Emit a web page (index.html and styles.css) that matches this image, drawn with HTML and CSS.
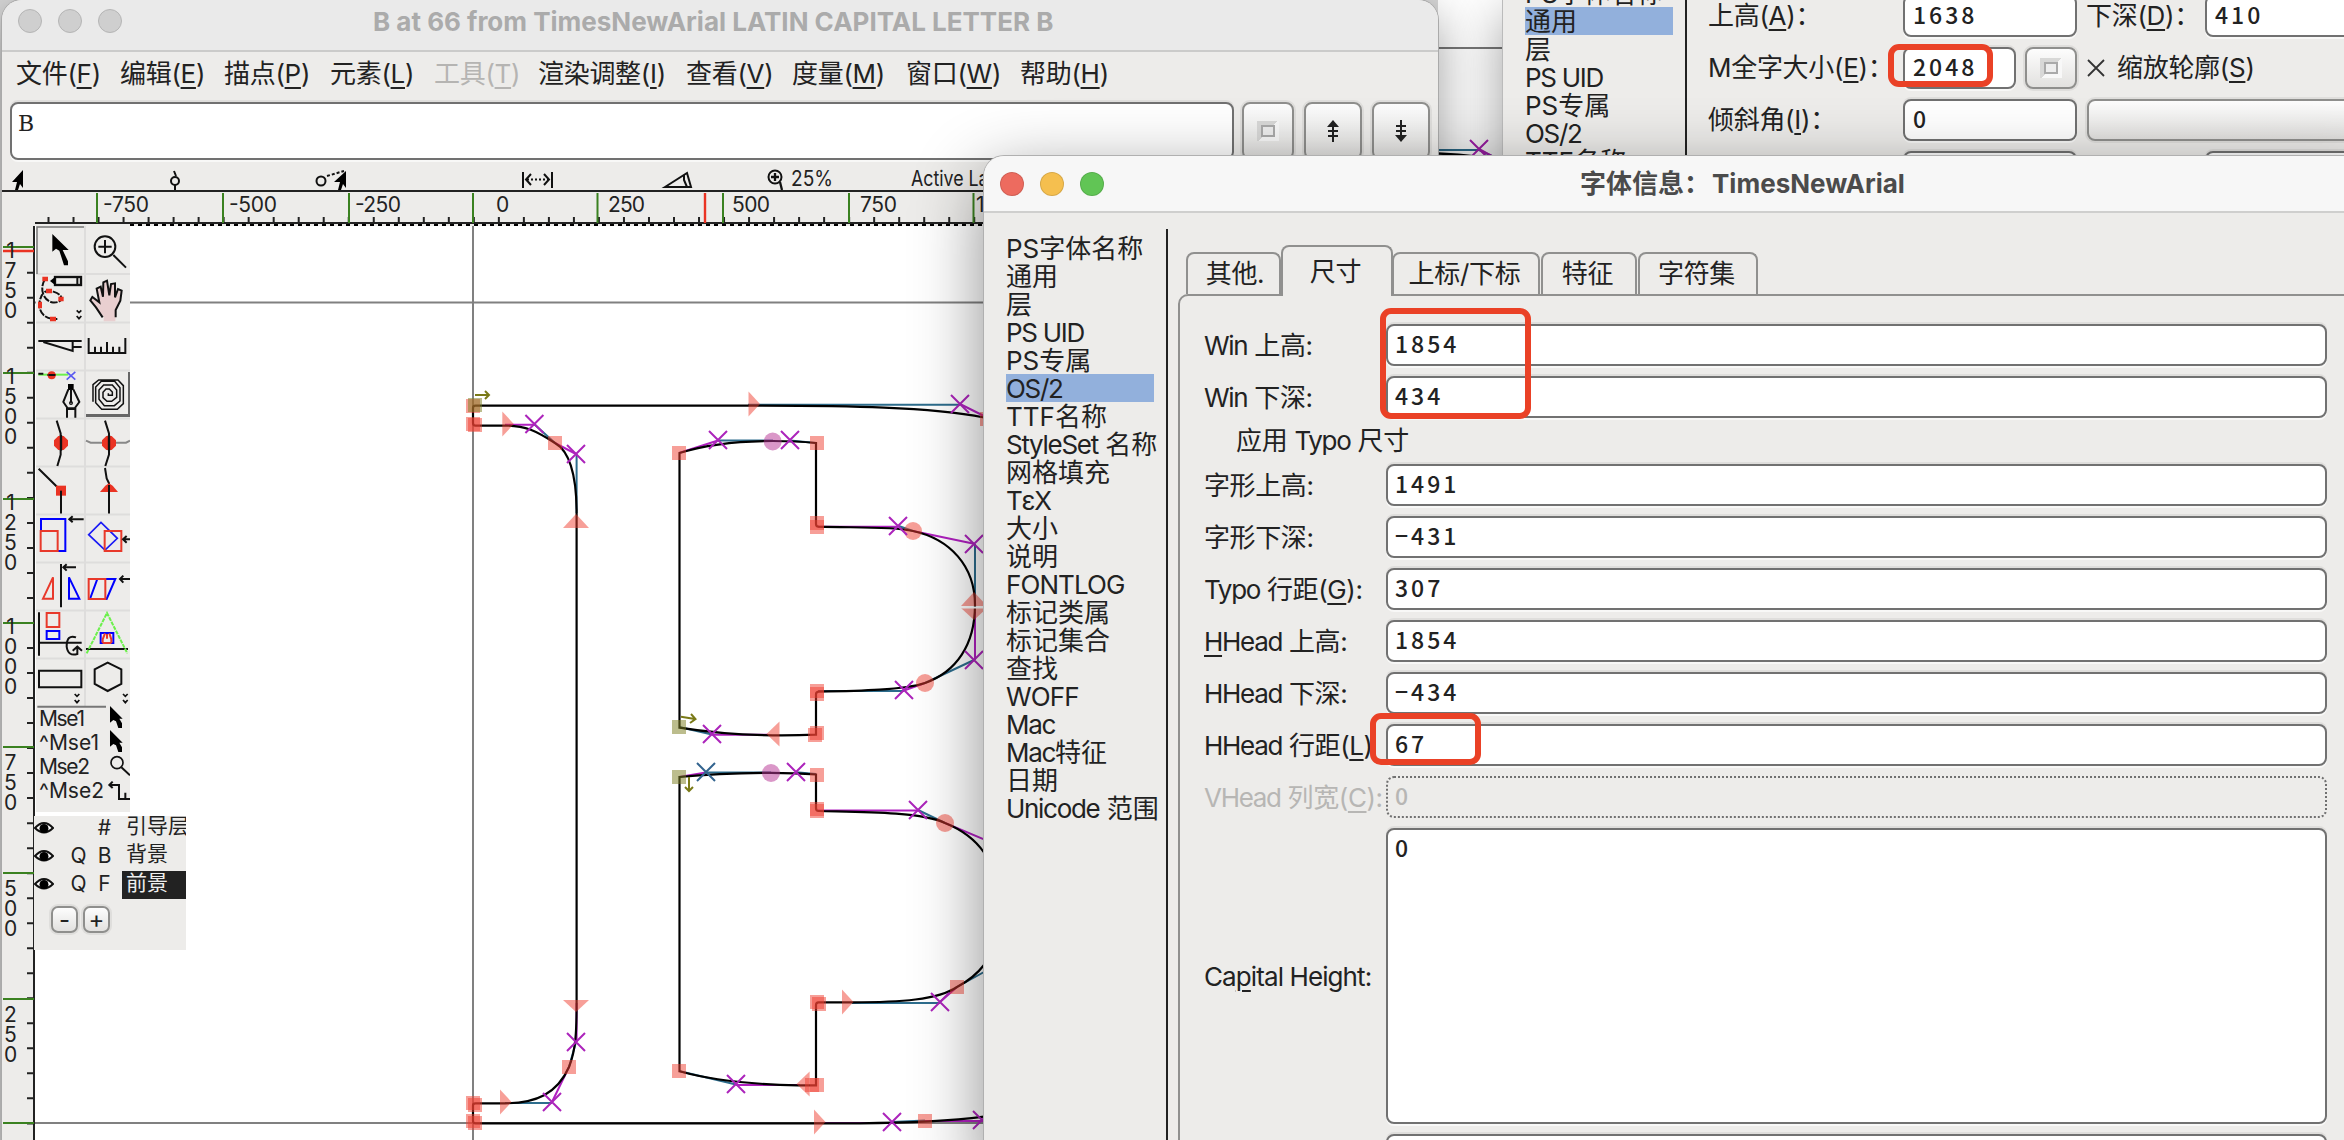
FILE: index.html
```html
<!DOCTYPE html>
<html lang="zh-CN">
<head>
<meta charset="utf-8">
<title>字体信息：TimesNewArial</title>
<link rel="stylesheet" href="styles.css">
</head>
<body>
<div class="desktop">

<svg class="back-glyph" viewBox="1438 0 65 156" width="65" height="156">
  <path d="M1438 48H1503" stroke="#777" stroke-width="2"/>
  <path d="M1438 150H1479L1503 161" stroke="#2d6d8d" stroke-width="2" fill="none"/>
  <path d="M1438 153.5C1455 154 1465 155 1480 157" stroke="#000" stroke-width="2.5" fill="none"/>
  <path d="M1479 149L1503 162M1470 140L1488 158M1488 140L1470 158" stroke="#a41fae" stroke-width="2" fill="none"/>
</svg>

<section class="window glyph-window">
  <header class="titlebar inactive">
    <span class="lights"><i></i><i></i><i></i></span>
    <span class="title glyph-title">B at 66 from TimesNewArial LATIN CAPITAL LETTER B</span>
  </header>
  <nav class="menubar">
    <span class="m1">文件(<u>F</u>)</span><span class="m1">编辑(<u>E</u>)</span><span class="m2">描点(<u>P</u>)</span><span class="m1">元素(<u>L</u>)</span><span class="m1 off">工具(<u>T</u>)</span><span class="m3">渲染调整(<u>I</u>)</span><span class="m2">查看(<u>V</u>)</span><span class="m4">度量(<u>M</u>)</span><span class="m4">窗口(<u>W</u>)</span><span class="m4">帮助(<u>H</u>)</span>
  </nav>
  <div class="entry-row">
    <div class="entry word">B</div>
    <div class="btn b1"><span class="mark"></span></div>
    <div class="btn b2"><svg width="14" height="24" viewBox="0 0 14 24"><path d="M7 4V23M2 12H12M2 17H12" stroke="#222" stroke-width="2"/><path d="M7 1L13 8H1Z" fill="#222"/></svg></div>
    <div class="btn b2"><svg width="14" height="24" viewBox="0 0 14 24"><path d="M7 1V20M2 7H12M2 12H12" stroke="#222" stroke-width="2"/><path d="M7 23L13 16H1Z" fill="#222"/></svg></div>
  </div>
  <svg class="info" viewBox="2 163 1436 27" width="1436" height="27">
    <g fill="none" stroke="#111" stroke-width="2">
      <path d="M23 170V188L20 184L18 190H15L17 182H12Z" fill="#000" stroke="none"/>
      <circle cx="175" cy="181" r="4"/><path d="M174 171L176 176M175 185V190"/>
      <circle cx="321" cy="181" r="4.5"/><path d="M327 176L344 171" stroke-dasharray="3 2"/>
      <path d="M346 171V188L343 184L341 190H338L340 182H334Z" fill="#000" stroke="none"/>
      <path d="M523 172V188M552 172V188"/><path d="M527 179.500H548" stroke-dasharray="2 2"/><path d="M531 174L526 179.500L531 185M544 174L549 179.500L544 185"/>
      <path d="M665 187L687 173L691 187ZM684 175V180L687 187"/>
      <circle cx="775" cy="177" r="6.500"/><path d="M771 177H779M775 173V181M780 182L782 190" stroke-width="2.300"/>
    </g>
    <text x="791" y="186" textLength="42" lengthAdjust="spacingAndGlyphs">25%</text>
    <text x="911" y="186" textLength="104" lengthAdjust="spacingAndGlyphs">Active Layer</text>
  </svg>
  <svg class="ruler-h" viewBox="2 190 1436 36" width="1436" height="36">
    <path d="M2 191H1438M35 223H1438" stroke="#222" stroke-width="2"/>
    <path d="M130 225H1438" stroke="#000" stroke-width="2" stroke-dasharray="4 4"/>
    <path d="M47.500 220H1438" stroke="#222" stroke-width="6" stroke-dasharray="2 23.020"/>
    <path d="M97 193V223M223 193V223M349 193V223M473 193V223M597.500 193V223M723 193V223M849 193V223M973.500 193V223" stroke="#3a8120" stroke-width="2"/>
    <path d="M705 193V223" stroke="#ea3323" stroke-width="2.400"/>
    <g>
      <text x="103" y="212" textLength="46">-750</text><text x="229" y="212" textLength="48">-500</text><text x="355" y="212" textLength="46">-250</text>
      <text x="496" y="212">0</text><text x="608" y="212" textLength="37">250</text><text x="732" y="212" textLength="38">500</text><text x="860" y="212" textLength="37">750</text><text x="976" y="212">1000</text>
    </g>
  </svg>
  <div class="workspace">
    <svg class="ruler-v" viewBox="2 226 33 914" width="33" height="914">
      <path d="M34 226V1140" stroke="#222" stroke-width="2"/>
      <path d="M30 271.700V1140" stroke="#222" stroke-width="6" stroke-dasharray="2 23.020"/>
      <path d="M3 247H34M3 373H34M3 499H34M3 623H34M3 747H34M3 873H34M3 999H34M3 1123H34" stroke="#3a8120" stroke-width="2"/>
      <path d="M3 251H34" stroke="#ea3323" stroke-width="2.400"/>
      <g text-anchor="middle">
        <text x="10.500" y="258">1</text><text x="10.500" y="278">7</text><text x="10.500" y="298">5</text><text x="10.500" y="318">0</text>
        <text x="10.500" y="384">1</text><text x="10.500" y="404">5</text><text x="10.500" y="424">0</text><text x="10.500" y="444">0</text>
        <text x="10.500" y="510">1</text><text x="10.500" y="530">2</text><text x="10.500" y="550">5</text><text x="10.500" y="570">0</text>
        <text x="10.500" y="634">1</text><text x="10.500" y="654">0</text><text x="10.500" y="674">0</text><text x="10.500" y="694">0</text>
        <text x="10.500" y="770">7</text><text x="10.500" y="790">5</text><text x="10.500" y="810">0</text>
        <text x="10.500" y="896">5</text><text x="10.500" y="916">0</text><text x="10.500" y="936">0</text>
        <text x="10.500" y="1022">2</text><text x="10.500" y="1042">5</text><text x="10.500" y="1062">0</text>
      </g>
    </svg>
    <svg class="canvas" viewBox="35 226 1403 914" width="1403" height="914">
      <defs>
        <path id="x" d="M-9-9L9 9M9-9L-9 9"/>
        <rect id="s" x="-7" y="-7" width="14" height="14"/>
        <path id="r" d="M0-12.500L11.500 0L0 12.500Z"/>
        <path id="l" d="M0-12.500L-13 0L0 12.500Z"/>
        <path id="t" d="M-13 7L0-7L13 7Z"/>
        <path id="d" d="M-13-6L0 6L13-6Z"/>
      </defs>
      <path d="M473 226V1140M35 302.500H1438M35 1123H1438" stroke="#808080" stroke-width="2"/>
      <g fill="none" stroke="#2d6d8d" stroke-width="2">
        <path d="M748 404.800H960M534 424L555 443M576.600 454V513M718 440.500H773M790 440.500L816 443M898 525.700L913 531M975 544V605M974 660L925 683M904 691H818M679 727L712 734.500M705 772.500H771M796 772.300L816 774M918 810L945 823M957 987L984 972M852 1003H940M576 1042L569 1067M552 1103H505M679 1071L736 1084.500M892 1122L925 1120.500"/>
      </g>
      <g fill="none" stroke="#b020c0" stroke-width="2">
        <path d="M505 424.800H534M555 443L576 454M679 453L718 440.500M960 404L984 416M818 526.700H898M913 531L974 543.700M975 612V660M904 690.500L925 683M712 734.700H768M679 777L706 772.500M818 810.500H918M945 823L984 839.300M940 1002L957 987M576.600 1003V1042M569 1067L552 1102M736 1085H800M825 1123H892M925 1121H984"/>
      </g>
      <g fill="none" stroke="#000" stroke-width="2.200">
        <path d="M984 417.500C930 407 850 405.700 748 405.700H475.500Q473 405.700 473 408V423Q473 425.600 475.500 425.600H505C526 425.600 536 431 555 443C569 451 576.600 475 576.600 513V1003C576.600 1030 576 1050 569 1067C557 1094 536 1103 505 1103.300H475.500Q473 1103.300 473 1105.500V1121Q473 1123.300 475.500 1123.300H860C900 1123 950 1121 984 1116.700"/>
        <path d="M679.500 453C705 445 735 441 773 441Q796 441 816 443V524Q816 526.500 818.500 526.700C850 528 890 526 913 531C950 539 975 566 975 605C975 645 956 672 925 683C904 690 860 691 818.500 691.700Q816 692 816 694.500V734.700Q795 735.500 773 735.300Q725 735 679.500 727.700Z"/>
        <path d="M984 852.500C974 838 960 829 945 823C920 811 850 812 818.500 811Q816 811 816 808V774.500Q795 772.800 771 772.800Q720 773 679.500 777V1071.300Q725 1084 798 1085.300H816V1005Q816 1002.300 818.500 1002.300H852C900 1002.300 938 1000 957 987Q974 978 984 965"/>
      </g>
      <g fill="#ef4032" fill-opacity=".5">
        <use href="#s" x="473" y="406"/><use href="#s" x="473" y="424"/><use href="#s" x="475" y="425"/><use href="#s" x="555" y="443"/><use href="#s" x="679" y="453"/><use href="#s" x="817" y="443"/>
        <use href="#s" x="817" y="523"/><use href="#s" x="817" y="527"/><use href="#s" x="817" y="691"/><use href="#s" x="817" y="694"/><use href="#s" x="817" y="733"/><use href="#s" x="815" y="735"/><use href="#s" x="987" y="419"/>
        <use href="#s" x="569" y="1067"/><use href="#s" x="473" y="1103"/><use href="#s" x="475" y="1105"/><use href="#s" x="473" y="1121"/><use href="#s" x="475" y="1123"/>
        <use href="#s" x="817" y="775"/><use href="#s" x="817" y="809"/><use href="#s" x="817" y="811"/><use href="#s" x="817" y="1002"/><use href="#s" x="819" y="1004"/><use href="#s" x="957" y="987"/><use href="#s" x="679" y="1071"/><use href="#s" x="817" y="1085"/><use href="#s" x="812" y="1085"/><use href="#s" x="925" y="1121"/>
        <circle cx="913" cy="531" r="9"/><circle cx="925" cy="683" r="9"/><circle cx="945" cy="823" r="9"/>
        <use href="#r" x="748.500" y="404"/><use href="#r" x="502.300" y="424"/><use href="#r" x="500" y="1102"/><use href="#r" x="842" y="1002"/><use href="#r" x="814" y="1122"/>
        <use href="#l" x="779.500" y="734"/><use href="#l" x="809.600" y="1084"/>
        <use href="#t" x="576" y="521"/><use href="#t" x="974" y="599"/><use href="#d" x="974" y="614"/><use href="#d" x="576" y="1006"/>
      </g>
      <path d="M961 607.500H984" stroke="#fff" stroke-width="2"/>
      <g fill="#b83896" fill-opacity=".52"><circle cx="772.700" cy="441.500" r="9"/><circle cx="771" cy="773" r="9"/></g>
      <g fill="#7f8024" fill-opacity=".52"><use href="#s" x="475" y="405"/><use href="#s" x="679" y="727"/><use href="#s" x="679" y="777"/></g>
      <path d="M475 395H489M485 391L489 395L485 399M681 716.700L695 719M691 714L695.500 719L690 723M689 777V790M685 787L689 791L693 787" stroke="#7a7a18" stroke-width="2" fill="none"/>
      <g stroke="#ac24bb" stroke-width="2">
        <use href="#x" x="534.400" y="424"/><use href="#x" x="576" y="454"/><use href="#x" x="718" y="440"/><use href="#x" x="790" y="440"/><use href="#x" x="960" y="404"/><use href="#x" x="898" y="526"/><use href="#x" x="974" y="544"/><use href="#x" x="974" y="660"/><use href="#x" x="904" y="690"/><use href="#x" x="712" y="734"/>
        <use href="#x" x="796" y="772"/><use href="#x" x="918" y="810"/><use href="#x" x="576" y="1042"/><use href="#x" x="552" y="1102"/><use href="#x" x="940" y="1002"/><use href="#x" x="736" y="1084"/><use href="#x" x="892" y="1122"/><use href="#x" x="982" y="1120"/>
      </g>
      <use href="#x" x="706" y="772" stroke="#33648f" stroke-width="2"/>
    </svg>

    <div class="palette tools">
      <svg viewBox="36 226 94 586" width="94" height="586" fill="none" stroke="#111" stroke-width="6">
        <path d="M36 274H130M36 322.500H130M36 370.500H130M36 418.500H130M36 466.500H130M36 514.500H130M36 562.500H130M36 610.500H130M36 658.500H130M85 226V706" stroke="#dedddc" stroke-width="2"/>
        <path d="M37 274V227H84" stroke="#777" stroke-width="1.500"/>
        <path d="M129.500 372V417M86 415.500H130" stroke="#666" stroke-width="3"/>
        <g transform="translate(0 220) scale(.33333)">
          <path d="M157 42V95L168 86L178 92L192 136H204V124L188 90H206Z" fill="#000" stroke="none"/>
          <circle cx="315" cy="80" r="31"/><path d="M340 105L378 143M295 80H335M315 60V100"/>
          <path d="M135 178C118 205 128 238 155 247C185 252 200 228 160 215C135 205 120 222 118 255C120 285 140 298 172 297" stroke-dasharray="22 4"/>
          <rect x="165" y="171" width="78" height="24" stroke-width="7"/><path d="M232 171V195"/><path d="M150 183L166 170V196Z" fill="#000" stroke="none"/>
          <path d="M127 170h17v14h-17zM138 206h18v14h-18zM175 230h16v14h-16zM114 245h12v20h-12zM150 290h18v14h-18z" fill="#ea3323" stroke="none"/>
          <path d="M230 271L237 278L244 271M230 288L237 296L244 288" stroke-width="5"/>
          <path d="M311 304V290L288 262L272 240L276 232L298 246L291 205L302 199L309 228L311 187L321 182L327 224L334 192L345 192L345 232L354 208L364 212L361 240L348 268L346 304Z" fill="#e9cfd0" stroke="none"/>
          <path d="M308 292L288 262L271 241L277 231L298 247L290 206L302 200L309 230L310 187L321 182L328 226L333 192L345 190L345 232L354 207L365 212L361 242L347 270V292"/>
          <path d="M115 363H245M130 366L218 393V363M218 381H245"/>
          <path d="M266 354V399H376V354M285 380V399M303 380V399M321 366V399M339 380V399M358 380V399"/>
          <path d="M115 464H205" stroke="#6cf04c"/><path d="M115 461H130M142 465H168"/><circle cx="155" cy="466" r="12" fill="#ea3323" stroke="none"/><path d="M145 465H165"/>
          <path d="M200 456L226 479M226 456L200 479" stroke="#5a5af0" stroke-width="5"/>
          <path d="M204 492h17v18h-17z" fill="#000" stroke="none"/><path d="M205 508L190 546L203 565H224L238 546L220 508M213 508V548M201 593V567H226V593"/><circle cx="213" cy="549" r="4" stroke-width="4"/>
          <path d="M325 520V526H337V516L328 507H318L309 517V533L321 544H335L350 532V510L337 495H311L297 510V538L313 557H343L360 543V503L344 484H304L287 501V548L305 568H352L370 551V497L354 480H296L279 494V545" stroke-width="4.500"/>
          <path d="M170 602L182 640V704L172 738" /><path d="M175 648h16l13 13v16l-13 13h-16l-13-13v-16z" fill="#ea3323" stroke="none"/><path d="M183 645V692" stroke-width="7"/>
          <path d="M258 662L272 668H378L390 662" stroke="#888"/><path d="M315 602L327 640V704L316 738"/><path d="M319 648h16l13 13v16l-13 13h-16l-13-13v-16z" fill="#ea3323" stroke="none"/><path d="M327 645V692" stroke-width="7"/>
          <path d="M116 746L183 812V880" /><path d="M168 797h30v30h-30z" fill="#ea3323" stroke="none"/><path d="M183 812V880"/>
          <path d="M315 744L320 775L327 790V880"/><path d="M300 816L316 797L327 790L338 797L354 816Z" fill="#ea3323" stroke="none"/><path d="M327 795V880"/>
        </g>
        <g transform="translate(0 500) scale(.33333)">
          <path d="M123 57H196V153H123Z" stroke="#00f"/><path d="M122 93H173V153H122Z" stroke="#e8392b" fill="#edecea"/><path d="M251 58H208M218 49L208 58L218 67"/>
          <path d="M303 67L266 104L315 150L352 115Z" stroke="#1a1af5" stroke-width="5"/><path d="M314 93H364V153H314Z" stroke="#e8392b"/><path d="M390 118H368M380 108L369 118L380 128"/>
          <path d="M183 192V322M228 202H190M200 193L190 202L200 212"/><path d="M159 232V296H129Z" stroke="#e8392b"/><path d="M207 232V296H238Z" stroke="#00f"/>
          <path d="M292 237H346L320 297H270Z" stroke="#00f"/><path d="M266 237H316V297H266Z" stroke="#e8392b"/><path d="M390 237H360M370 227L360 237L370 248"/>
          <path d="M117 337V467M117 428H245"/><path d="M140 339H178V381H140Z" stroke="#e8392b"/><path d="M140 393H178V417H140Z" stroke="#00f"/><path d="M228 412Q200 402 200 440Q204 470 232 462V442M218 452L232 440L246 452"/>
          <path d="M258 447H384"/><path d="M260 460L321 339L382 460" stroke="#6cf04c" stroke-dasharray="12 3"/><path d="M302 399H340V429H302Z" stroke="#00f"/><path d="M308 429V418L315 400M334 429V418L328 400M321 402V416M308 429H334" stroke="#e8392b"/>
          <path d="M117 512H244V562H117ZM323 488L364 508V552L323 573L284 552V508Z"/>
          <path d="M224 582L231 589L238 582M224 600L231 608L238 600M369 582L376 589L383 582M369 600L376 608L383 600" stroke-width="5"/>
          <path d="M112 620H318" stroke="#777"/>
          <path id="ptr" d="M330 618V668L340 660L348 664L355 684H366V670L358 656H368Z" fill="#000" stroke="none"/><use href="#ptr" y="72"/>
          <circle cx="351" cy="788" r="18" stroke-width="5"/><path d="M364 802L390 826"/>
          <path d="M328 855H357V897H390M376 878V897M338 845L328 855L338 864"/>
        </g>
        <g class="mse"><text x="39" y="726" textLength="46">Mse1</text><text x="39" y="750" textLength="60">^Mse1</text><text x="39" y="774" textLength="51">Mse2</text><text x="39" y="798" textLength="65">^Mse2</text></g>
      </svg>
    </div>

    <div class="palette layers">
      <svg width="0" height="0" class="defs"><symbol id="eye" viewBox="0 0 20 14"><path d="M1 7Q10-3 19 7Q10 16 1 7Z" fill="#fff" stroke="#111" stroke-width="2"/><circle cx="10" cy="7.500" r="4.500" fill="#000"/></symbol></svg>
      <div class="layer"><svg width="20" height="14"><use href="#eye"/></svg><b></b><b>#</b><span>引导层</span></div>
      <div class="layer"><svg width="20" height="14"><use href="#eye"/></svg><b>Q</b><b>B</b><span>背景</span></div>
      <div class="layer"><svg width="20" height="14"><use href="#eye"/></svg><b>Q</b><b>F</b><span class="sel">前景</span></div>
      <div class="layer-btns"><div class="btn">-</div><div class="btn">+</div></div>
    </div>
  </div>
</section>

<section class="window general-window">
  <ul class="list list-back">
    <li>PS字体名称</li><li class="sel">通用</li><li>层</li><li><span class="l">PS UID</span></li><li>PS专属</li><li><span class="l">OS/2</span></li><li>TTF名称</li>
  </ul>
  <div class="general">
    <div class="grow"><label>上高(<u>A</u>)：</label><div class="entry w174">1638</div><label class="lab2">下深(<u>D</u>)：</label><div class="entry fill">410</div></div>
    <div class="grow"><label>M全字大小(<u>E</u>)：</label><div class="entry w113">2048</div><div class="btn em"><span class="mark"></span></div>
      <svg class="cross" width="18" height="18" viewBox="0 0 18 18"><path d="M1 1L17 17M17 1L1 17" stroke="#333" stroke-width="1.800"/></svg><label class="scale">缩放轮廓(<u>S</u>)</label></div>
    <div class="grow"><label>倾斜角(<u>I</u>)：</label><div class="entry w174">0</div><div class="btn wide"></div></div>
    <div class="grow"><label></label><div class="entry w174"></div><label class="lab2"></label><div class="entry fill"></div></div>
  </div>
  <div class="note n-em"></div>
</section>

<section class="window os2-window">
  <header class="titlebar active">
    <span class="lights"><i></i><i></i><i></i></span>
    <span class="title os2-title">字体信息：<span class="tn">TimesNewArial</span></span>
  </header>
  <div class="os2-body">
    <ul class="list">
      <li>PS字体名称</li><li>通用</li><li>层</li><li><span class="l">PS UID</span></li><li>PS专属</li><li class="sel"><span class="l">OS/2</span></li><li>TTF名称</li><li><span class="l">StyleSet</span> 名称</li><li>网格填充</li><li><span class="l">TεX</span></li><li>大小</li><li>说明</li><li><span class="w">FONTLOG</span></li><li>标记类属</li><li>标记集合</li><li>查找</li><li><span class="w">WOFF</span></li><li><span class="l">Mac</span></li><li><span class="l">Mac</span>特征</li><li>日期</li><li><span class="l">Unicode</span> 范围</li>
    </ul>
    <div class="page">
      <div class="tabs"><span class="t1">其他.</span><span class="t2 on">尺寸</span><span class="t3">上标/下标</span><span class="t4">特征</span><span class="t5">字符集</span></div>
      <div class="form">
        <div class="row"><label><span class="l">Win</span> 上高:</label><div class="entry">1854</div></div>
        <div class="row"><label><span class="l">Win</span> 下深:</label><div class="entry">434</div></div>
        <div class="check">应用 <span class="l">Typo</span> 尺寸</div>
        <div class="row"><label>字形上高:</label><div class="entry">1491</div></div>
        <div class="row"><label>字形下深:</label><div class="entry">−431</div></div>
        <div class="row"><label><span class="l">Typo</span> 行距(<u>G</u>):</label><div class="entry">307</div></div>
        <div class="row"><label><span class="l"><u>H</u>Head</span> 上高:</label><div class="entry">1854</div></div>
        <div class="row"><label><span class="l">HHead</span> 下深:</label><div class="entry">−434</div></div>
        <div class="row"><label><span class="l">HHead</span> 行距(<u>L</u>)</label><div class="entry">67</div></div>
        <div class="row off"><label><span class="l">VHead</span> 列宽(<u>C</u>):</label><div class="entry">0</div></div>
        <div class="row tall"><label><span class="w">Ca<u>p</u>ital Height:</span></label><div class="entry">0</div></div>
        <div class="row"><label></label><div class="entry"></div></div>
      </div>
    </div>
  </div>
  <div class="note n-win"></div>
  <div class="note n-gap"></div>
</section>

</div>
</body>
</html>
```
FILE: styles.css
```css
* { box-sizing: border-box; }
body { margin: 0; background: #ececec; }
.desktop {
  position: relative; width: 2344px; height: 1140px; overflow: hidden; background: #d6d6d6;
  font-family: Inter, "Noto Sans CJK SC", sans-serif; font-size: 26px; color: #222;
}
.l { letter-spacing: -1.3px; }
.w { letter-spacing: -.9px; }
u { text-decoration: underline; text-decoration-thickness: 2px; text-underline-offset: 4px; }

.window { position: absolute; background: #edecea; overflow: hidden; }
.titlebar { position: relative; display: flex; align-items: center; }
.lights { display: flex; gap: 16px; }
.lights i { width: 24px; height: 24px; border-radius: 50%; border: 1px solid rgba(0,0,0,.12); }
.title { font-weight: 700; white-space: nowrap; }

.btn {
  display: flex; flex-shrink: 0; align-items: center; justify-content: center; border: 2px solid #8f8f8d; border-radius: 8px;
  background: linear-gradient(#fdfdfd, #e2e1df); box-shadow: 0 0 0 2px #dfdedc;
}
.entry {
  flex-shrink: 0; border: 2px solid #717171; border-radius: 8px; background: #fff; box-shadow: 0 -2px 0 #dfdedc, 0 2px 0 #f8f8f7;
  font-family: "Noto Sans CJK SC", sans-serif; font-size: 23px; font-weight: 500; letter-spacing: 3px; line-height: 34px; padding: 0 8px;
}
.mark { width: 22px; height: 20px; display: flex; background: linear-gradient(135deg, #d8d8d7 50%, #f8f8f8 50%); align-items: center; justify-content: center; }
.mark::after { content: ""; width: 10px; height: 8px; border: 2px solid #aaa; background: #eee; }

/* glyph editor */
.back-glyph { position: absolute; left: 1438px; top: 0; background: #fff; }
.glyph-window { left: 2px; top: 0; width: 1436px; height: 1160px; border-radius: 20px 20px 0 0; box-shadow: 0 0 0 1px #aaa, 0 16px 50px rgba(0,0,0,.4); }
.inactive { height: 52px; padding: 0 0 8px 16px; background: #eaeaea; border-bottom: 2px solid #cbcbca; }
.inactive .lights i { background: #cfcfcf; border-color: #b5b5b5; }
.glyph-title { margin-left: 251px; color: #ababab; font-size: 26px; letter-spacing: 0; }
.menubar { display: flex; height: 48px; padding: 0 0 10px 14px; align-items: center; white-space: nowrap; letter-spacing: -.3px; }
.menubar .m1 { width: 104px; } .menubar .m2 { width: 106px; } .menubar .m3 { width: 148px; } .menubar .m4 { width: 114px; }
.menubar .off { color: #b5b4b2; }
.entry-row { display: flex; height: 63px; padding: 2px 8px 2px 8px; align-items: flex-start; }
.word { width: 1224px; height: 58px; font-family: "DejaVu Serif", serif; font-size: 22px; line-height: 40px; padding: 0 6px; font-weight: 400; }
.entry-row .btn { height: 58px; }
.b1 { width: 52px; margin-left: 8px; } .b2 { width: 58px; margin-left: 10px; } .b2 + .b2 { margin-left: 10px; }
.info, .ruler-h, .ruler-v, .canvas { display: block; }
.info text { font-size: 21px; fill: #222; }
.ruler-h text, .ruler-v text { font-size: 21px; fill: #222; }
.workspace { position: relative; display: flex; }
.canvas { background: #fff; }
.palette { position: absolute; background: #edecea; overflow: hidden; }
.tools { left: 34px; top: 0; width: 94px; height: 586px; }
.tools svg { display: block; }
.mse text { font-size: 21px; fill: #222; stroke: none; }
.layers { left: 32px; top: 590px; width: 152px; height: 134px; }
.defs { position: absolute; }
.layer { display: grid; grid-template-columns: 32px 25px 31px 1fr; height: 28px; align-items: center; font-size: 21px; line-height: 28px; white-space: nowrap; position: relative; top: -2px; }
.layer b { font-weight: 400; text-align: center; }
.layer b:nth-child(3) { margin-right: 4px; }
.layer span { padding-left: 4px; line-height: 24px; height: 28px; }
.layer .sel { background: #222; color: #eee; position: relative; top: 1px; }
.layer-btns { display: flex; gap: 5px; padding: 6px 0 0 17px; }
.layer-btns .btn { width: 27px; height: 27px; font-size: 24px; border-radius: 7px; }

/* lists */
.list { list-style: none; margin: 0; padding: 0; line-height: 30px; white-space: nowrap; flex-shrink: 0; }
.list li { height: 28px; width: 148px; }
.list .sel { background: #92b0dc; }

/* font info, rear */
.general-window { left: 1503px; top: 0; width: 860px; height: 1160px; display: flex; box-shadow: 0 0 0 1px #bbb, 0 16px 50px rgba(0,0,0,.4); }
.list-back { width: 182px; height: 180px; padding-left: 22px; margin-top: -21px; }
.general { border-left: 2px solid #222; padding-left: 21px; width: 700px; height: 160px; flex-shrink: 0; }
.grow { display: flex; align-items: center; height: 42px; margin-bottom: 10px; white-space: nowrap; }
.grow:first-child { margin-top: -5px; }
.grow label { width: 195px; flex-shrink: 0; padding-bottom: 5px; letter-spacing: -.3px; }
.grow .entry { height: 42px; }
.grow .w174 { width: 174px; } .grow .w113 { width: 113px; }
.grow .lab2 { width: 119px; margin-left: 9px; }
.fill { width: 180px; }
.em { width: 52px; height: 42px; margin-left: 9px; }
.cross { margin: 0 12px 0 10px; flex-shrink: 0; }
.wide { width: 400px; height: 42px; margin-left: 10px; }

/* font info, front */
.os2-window { left: 984px; top: 156px; width: 1400px; height: 1010px; border-radius: 20px 0 0 0; box-shadow: 0 0 0 1px #b0b0b0, 0 20px 70px rgba(0,0,0,.46); }
.active { height: 57px; background: #f7f7f7; border-bottom: 2px solid #cfcfce; padding-left: 16px; }
.active .lights i:nth-child(1) { background: #ed6b5f; }
.active .lights i:nth-child(2) { background: #f5bf4f; }
.active .lights i:nth-child(3) { background: #61c555; }
.os2-title { margin-left: 476px; color: #4b4b4b; padding-bottom: 4px; font-weight: 600; }
.tn { font-size: 26px; font-weight: 700; margin-left: 2px; }
.os2-body { display: flex; padding-top: 16px; }
.os2-body .list { width: 184px; height: 920px; padding: 5px 0 0 22px; border-right: 2px solid #222; }
.page { width: 1200px; margin-left: 10px; padding-top: 15px; flex-shrink: 0; }
.tabs { display: flex; align-items: flex-end; height: 50px; padding-left: 8px; position: relative; z-index: 1; letter-spacing: -.3px; }
.tabs span { height: 42px; border: 2px solid #90908f; border-bottom: 0; border-radius: 8px 8px 0 0; display: flex; align-items: center; justify-content: center; margin-right: 1px; padding: 0 3px 5px 0; }
.tabs .on { height: 51px; background: #edecea; margin: 0 -1px -2px -1px; position: relative; }
.tabs .t1 { width: 95px; padding-left: 6px; } .t2 { width: 112px; } .t3 { width: 148px; } .t4 { width: 96px; } .t5 { width: 120px; }
.form { border: 2px solid #90908f; border-radius: 10px 0 0 0; padding: 28px 0 0 24px; height: 900px; }
.row { display: flex; align-items: center; height: 42px; margin-bottom: 10px; white-space: nowrap; }
.row label { width: 182px; padding-bottom: 4px; letter-spacing: -.4px; flex-shrink: 0; }
.row .entry { width: 941px; height: 100%; padding-left: 7px; }
.check { height: 36px; line-height: 26px; padding-left: 32px; letter-spacing: -.3px; }
.row.off { color: #b7b6b4; }
.row.off .entry { background: none; border-style: dotted; box-shadow: none; }
.row.tall { height: 296px; }
.row.tall label { padding-bottom: 0; }

/* hand-drawn highlights */
.note { position: absolute; border: 6px solid #ea4126; border-radius: 11px; }
.n-em { left: 385px; top: 44px; width: 105px; height: 43px; }
.n-win { left: 396px; top: 152px; width: 151px; height: 111px; }
.n-gap { left: 386px; top: 557px; width: 111px; height: 52px; }
```
